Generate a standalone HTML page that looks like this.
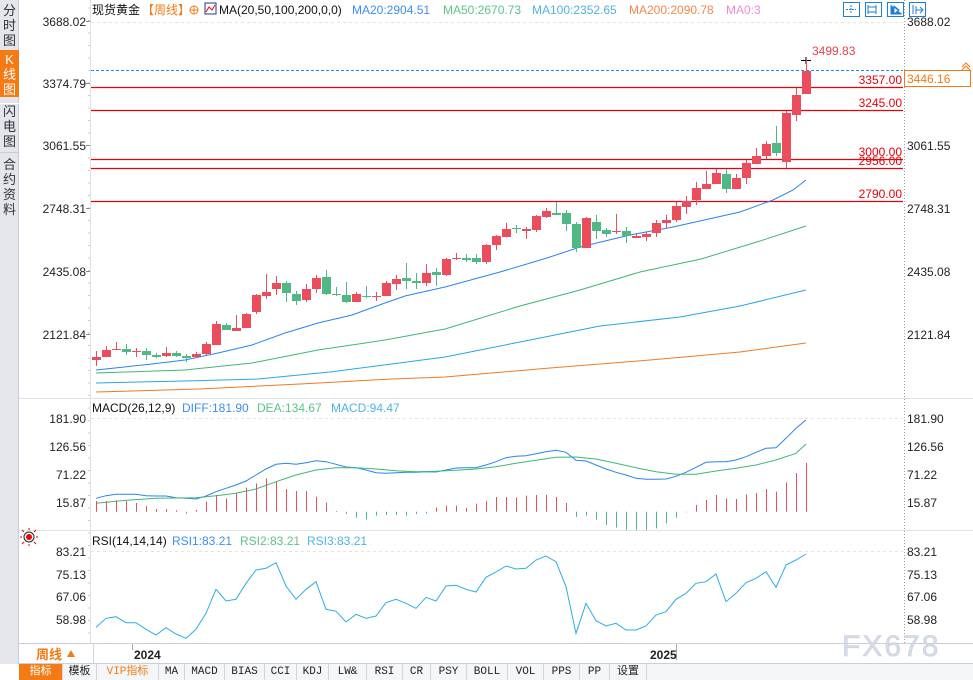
<!DOCTYPE html>
<html><head><meta charset="utf-8">
<style>
*{margin:0;padding:0;box-sizing:border-box}
body{width:973px;height:680px;overflow:hidden;background:#fff;font-family:"Liberation Sans","Noto Sans CJK SC",sans-serif;position:relative}
.side{position:absolute;left:0;top:0;width:19px;height:664px;background:#e4e6ec;border-right:1px solid #c8ccd4}
.tab{position:absolute;left:0;width:19px;font-size:13px;line-height:15px;text-align:center;color:#333}
.bar{position:absolute;left:19px;top:663px;width:954px;height:17px;background:#f5f6f8;border-top:1px solid #c9ced8;font-size:11px;font-family:"Liberation Mono","Noto Sans CJK SC",monospace}
.bar span{position:absolute;top:0;height:16px;line-height:16px;text-align:center;border-right:1px solid #d0d4dc;color:#222}
svg text{font-family:"Liberation Sans","Noto Sans CJK SC",sans-serif}
</style></head><body>
<div class="side">
 <div class="tab" style="top:3px">分<br>时<br>图</div>
 <div class="tab" style="top:50px;height:47px;background:#f47a14;color:#fff;padding-top:2px">K<br>线<br>图</div>
 <div class="tab" style="top:103px;border-top:1px solid #fff">闪<br>电<br>图</div>
 <div class="tab" style="top:152px;border-top:1px solid #c8ccd4;padding-top:4px">合<br>约<br>资<br>料</div>
</div>
<svg id="s" width="973" height="680" style="position:absolute;left:0;top:0"></svg>
<div class="bar">
 <span style="left:0;width:44px;background:#f47a14;color:#fff">指标</span>
 <span style="left:44px;width:34px">模板</span>
 <span style="left:78px;width:62px;color:#f47a14">VIP指标</span>
 <span style="left:140px;width:26px">MA</span>
 <span style="left:166px;width:40px">MACD</span>
 <span style="left:206px;width:40px">BIAS</span>
 <span style="left:246px;width:32px">CCI</span>
 <span style="left:278px;width:32px">KDJ</span>
 <span style="left:310px;width:38px">LW&amp;</span>
 <span style="left:348px;width:36px">RSI</span>
 <span style="left:384px;width:28px">CR</span>
 <span style="left:412px;width:36px">PSY</span>
 <span style="left:448px;width:41px">BOLL</span>
 <span style="left:489px;width:36px">VOL</span>
 <span style="left:525px;width:36px">PPS</span>
 <span style="left:561px;width:30px">PP</span>
 <span style="left:591px;width:37px">设置</span>
</div>
<script>
var s='';
function L(x1,y1,x2,y2,c,w,d){s+='<line x1="'+x1+'" y1="'+y1+'" x2="'+x2+'" y2="'+y2+'" stroke="'+c+'" stroke-width="'+(w||1)+'"'+(d?' stroke-dasharray="'+d+'"':'')+'/>';}
function T(x,y,t,c,sz,a,extra){s+='<text x="'+x+'" y="'+y+'" fill="'+c+'" font-size="'+(sz||12)+'"'+(a?' text-anchor="'+a+'"':'')+(extra||'')+'>'+t+'</text>';}
function P(pts,c,w){s+='<polyline fill="none" stroke="'+c+'" stroke-width="'+(w||1)+'" points="'+pts.map(function(p){return p[0]+','+p[1]}).join(' ')+'"/>';}
L(19,398.5,973,398.5,'#dfe2e8');L(19,530.5,973,530.5,'#dfe2e8');L(19,643.5,973,643.5,'#c9ced8');
L(90.5,0,90.5,643,'#dde0e6');
L(904.5,0,904.5,643,'#9aa0aa',1,'1,2');
for(var y=8;y<643;y+=12.5){L(88,y,90,y,'#c9ccd2');}
L(91,22.5,903,22.5,'#e4e4e4',1,'3,3');L(91,418.5,903,418.5,'#e4e4e4',1,'3,3');L(91,551.5,903,551.5,'#e4e4e4',1,'3,3');
var pl=[[3688.02,26],[3374.79,88],[3061.55,150],[2748.31,213],[2435.08,276],[2121.84,339]];
pl.forEach(function(p){T(86,p[1],p[0].toFixed(2),'#222',12,'end');if(p[0]!=3374.79)T(907,p[1],p[0].toFixed(2),'#222',12);L(86,p[1]-4.5,90,p[1]-4.5,'#888');});
[['181.90',423],['126.56',451],['71.22',479],['15.87',507]].forEach(function(p){T(86,p[1],p[0],'#222',12,'end');T(907,p[1],p[0],'#222',12);});
[['83.21',556],['75.13',579],['67.06',601],['58.98',624]].forEach(function(p){T(86,p[1],p[0],'#222',12,'end');T(907,p[1],p[0],'#222',12);});
L(91,70.5,903,70.5,'#1e88ff',1,'3,2');
[[87.5,'3357.00',84],[110.5,'3245.00',107],[159.5,'3000.00',156],[168.5,'2956.00',165],[201.5,'2790.00',198]].forEach(function(h){L(91,h[0],903,h[0],'#e8000b',1.2);T(902,h[2],h[1],'#e8000b',12,'end');});
s+='<rect x="904.5" y="70.5" width="66" height="16" fill="#fff" stroke="#f47a14"/>';T(907,83,'3446.16','#f47a14',12);
s+='<path d="M962 67 l4 -4 l4 4 M962 70 l4 -4 l4 4" stroke="#f47a14" fill="none"/>';
T(812,55,'3499.83','#e8404f',12);L(801,60.5,811,60.5,'#000');L(806,57,806,64,'#000');
P([[96,370],[152,364],[185,360],[218,353],[252,345],[285,333],[318,323],[352,315],[385,303],[405,296],[445,287],[500,272],[547,258],[580,247],[630,235],[673,227],[740,212],[773,200],[793,190],[806,180]],'#2a84ee');
P([[96,373],[185,370],[252,363],[318,350],[385,340],[445,329],[520,306],[580,290],[640,272],[701,259],[760,241],[806,226]],'#3cb878');
P([[96,383],[185,381],[258,379],[330,372],[445,357],[520,342],[600,326],[680,317],[740,306],[806,290]],'#26a6e6');
P([[96,392],[200,389],[300,384],[392,379],[445,377],[550,368],[650,360],[740,352],[806,343]],'#f07b24');
var C=[[357,360,351,366,'r'],[350,357,346,357,'r'],[349,350,342,350,'r'],[349,352,344,355,'g'],[351,352,348,357,'r'],[351,355,348,360,'g'],[355,357,353,358,'g'],[353,356,347,357,'r'],[353,356,351,357,'g'],[356,358,354,362,'g'],[354,357,352,358,'r'],[344,354,342,355,'r'],[324,345,321,345,'r'],[325,330,323,330,'g'],[328,331,315,331,'r'],[314,328,313,328,'r'],[295,312,294,314,'r'],[292,296,274,299,'r'],[283,289,276,295,'r'],[283,293,281,302,'g'],[294,301,291,305,'g'],[289,300,284,302,'r'],[278,289,275,293,'r'],[277,294,270,295,'g'],[294,295,287,296,'g'],[295,302,282,303,'g'],[294,302,292,302,'r'],[296,297,286,298,'g'],[296,297,292,301,'r'],[283,296,281,296,'r'],[279,284,275,290,'r'],[278,281,263,289,'g'],[281,283,273,289,'g'],[273,283,264,286,'r'],[272,275,268,286,'g'],[259,275,258,276,'r'],[258,259,253,260,'r'],[258,260,254,262,'g'],[258,262,254,264,'g'],[245,262,244,264,'r'],[236,245,235,250,'r'],[229,237,223,237,'r'],[228,229,225,233,'g'],[229,231,227,239,'r'],[216,230,215,232,'r'],[211,217,208,218,'r'],[213,215,202,215,'g'],[213,224,210,231,'g'],[224,248,222,252,'g'],[218,248,217,248,'r'],[222,231,215,239,'g'],[230,234,228,237,'g'],[231,232,214,234,'r'],[231,236,227,243,'g'],[236,238,233,238,'r'],[234,237,232,241,'r'],[223,233,220,237,'r'],[220,223,215,228,'r'],[206,220,202,222,'r'],[201,207,196,214,'r'],[188,200,182,205,'r'],[184,189,171,189,'r'],[173,184,169,184,'r'],[174,189,169,193,'g'],[178,189,174,189,'r'],[163,178,160,184,'r'],[156,164,148,164,'r'],[144,156,141,159,'r'],[143,153,126,156,'g'],[113,162,111,168,'r'],[95,115,88,121,'r'],[71,94,60,94,'r']];
C.forEach(function(c,i){var x=96+10*i,col=c[4]=='r'?'#ec4d5d':'#4fb884';L(x+.5,c[2],x+.5,c[3],col);s+='<rect x="'+(x-4)+'" y="'+c[0]+'" width="9" height="'+Math.max(1,c[1]-c[0])+'" fill="'+col+'"/>';});
var D=[310,302,298,298,298,302,303,303,308,310,312,303,290,280,270,258,240,222,208,205,208,203,197,200,208,216,218,225,233,235,233,232,232,230,231,225,219,218,218,210,200,188,184,182,176,170,166,172,196,198,210,222,232,240,250,253,253,252,244,232,217,202,200,200,195,185,172,160,158,130,100,75];
P(D.map(function(v,i){return [96+10*i,(395+v/3).toFixed(1)]}),'#2a84ee');
var E=[[0,325],[3,316],[6,310],[10,308],[12,302],[14,295],[16,282],[18,260],[20,240],[22,225],[24,218],[26,218],[28,222],[30,227],[32,230],[34,229],[36,226],[38,222],[40,215],[42,205],[44,196],[46,187],[48,186],[50,192],[52,205],[54,218],[56,230],[58,238],[60,238],[62,228],[64,220],[66,210],[68,195],[70,175],[71,147]];
P(E.map(function(e){return [96+10*e[0],(395+e[1]/3).toFixed(1)]}),'#3cb878');
var H=[318,318,316,318,324,333,342,342,346,356,345,320,300,310,295,278,265,250,260,282,288,288,305,323,348,357,368,373,362,360,360,362,357,355,338,332,332,339,326,318,306,306,308,302,300,300,306,324,366,362,374,390,398,405,405,405,400,385,368,352,330,315,300,310,312,298,294,282,290,262,234,204];
H.forEach(function(v,i){var x=96.5+10*i,y=395+v/3,z=511.7;L(x,Math.min(y,z),x,Math.max(y,z),y<z?'#ec4d5d':'#4fb884');});
var R=[292,265,260,278,278,298,315,293,312,325,298,250,178,213,208,160,120,115,98,168,208,178,155,238,244,276,253,265,258,218,208,220,235,202,213,168,166,178,186,142,126,108,117,115,90,78,95,170,310,220,272,288,280,300,300,288,255,245,208,190,160,155,132,215,190,158,145,125,172,105,90,72];
P(R.map(function(v,i){return [96+10*i,(530+v/3).toFixed(1)]}),'#29aee6');
T(92,14,'现货黄金','#111',12);T(142,14,'【周线】','#f47a14',12);
s+='<circle cx="194" cy="10" r="4" fill="none" stroke="#f47a14"/><line x1="190" y1="10" x2="198" y2="10" stroke="#f47a14"/><line x1="194" y1="6" x2="194" y2="14" stroke="#f47a14"/>';
s+='<rect x="205" y="3" width="11" height="11" fill="#fff" stroke="#1a3a8c"/><polyline points="206,12 209,7 212,10 215,5" fill="none" stroke="#e8000b"/>';
T(219,14,'MA(20,50,100,200,0,0)','#111',12);T(352,14,'MA20:2904.51','#3d8ff0',12);T(443,14,'MA50:2670.73','#5cc48a',12);T(532,14,'MA100:2352.65','#4fb3e8',12);T(629,14,'MA200:2090.78','#f08a4a',12);T(726,14,'MA0:3','#f08adc',12);
[843,865,887,909].forEach(function(x,i){s+='<rect x="'+x+'.5" y="2.5" width="16" height="14" fill="#fff" stroke="#1e7fd8"/>';});
s+='<path d="M851 5v9M846 9.5h10" stroke="#1e7fd8" stroke-dasharray="2,1"/><path d="M868 5v9M876 5v9M868 7h8M868 12h8" stroke="#1e7fd8"/><path d="M891 5v9h11M894 6l5 4l-5 4z" stroke="#1e7fd8" fill="#1e7fd8"/><path d="M913 5v9M916 6v8M916 10h6M920 7l3 3l-3 3" stroke="#1e7fd8" fill="none"/>';
T(92,412,'MACD(26,12,9)','#111',12);T(182,412,'DIFF:181.90','#3d8ff0',12);T(257,412,'DEA:134.67','#5cc48a',12);T(331,412,'MACD:94.47','#4fb3e8',12);
T(92,545,'RSI(14,14,14)','#111',12);T(172,545,'RSI1:83.21','#3d8ff0',12);T(240,545,'RSI2:83.21','#5cc48a',12);T(307,545,'RSI3:83.21','#4fb3e8',12);
s+='<circle cx="29" cy="537" r="3" fill="#e8000b"/><circle cx="29" cy="537" r="5" fill="none" stroke="#222"/><path d="M22 537h-2M36 537h2M29 530v-2M29 544v2M24 532l-2-2M34 532l2-2M24 542l-2 2M34 542l2 2" stroke="#e8000b"/>';
s+='<rect x="19" y="644" width="73" height="19" fill="#fff"/><line x1="93.5" y1="644" x2="93.5" y2="663" stroke="#d0d4dc"/>';
T(36,659,'周线','#f47a14',13,null,' font-weight="bold"');s+='<path d="M67 657l4-7l4 7z" fill="#f47a14"/>';
L(132.5,644,132.5,650,'#aaa');T(134,659,'2024','#222',12,null,' font-weight="bold"');
L(676.5,644,676.5,660,'#aaa');T(650,659,'2025','#222',12,null,' font-weight="bold"');
s+='<text x="842" y="656" font-size="30" fill="#d4dced" stroke="#c9cdd6" stroke-width=".6" letter-spacing="2" font-family="Liberation Sans,sans-serif">FX678</text>';
document.getElementById('s').innerHTML=s;
</script>
</body></html>
